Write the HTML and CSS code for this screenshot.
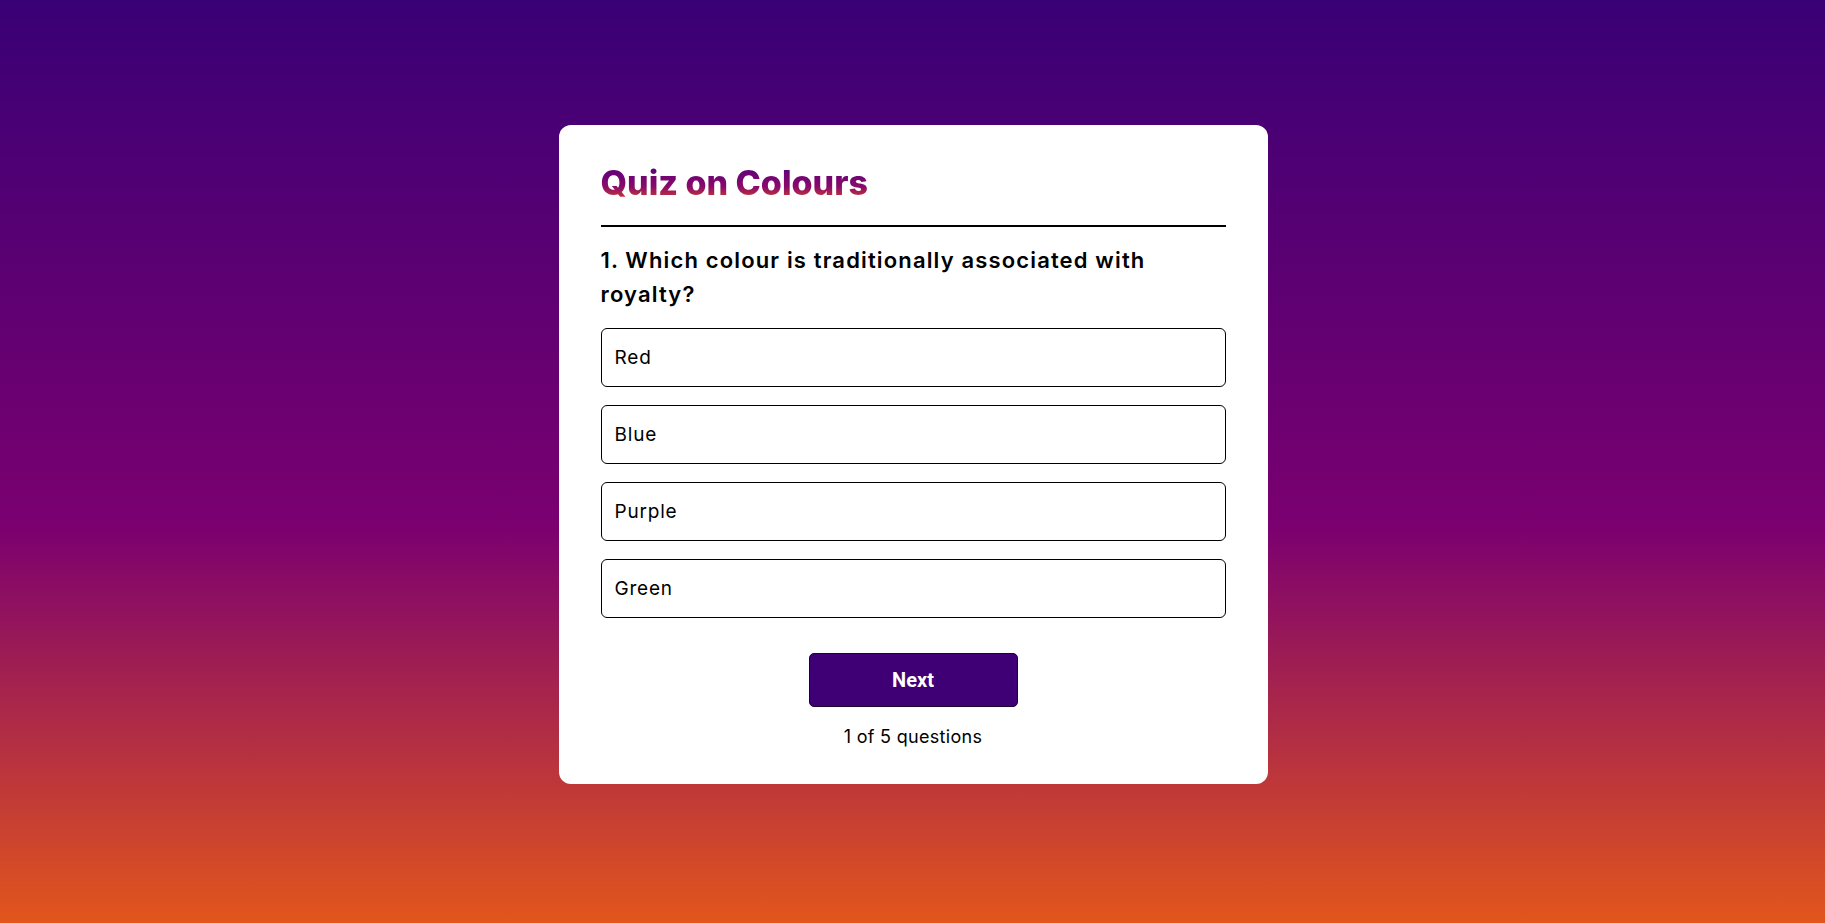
FILE: index.html
```html
<!DOCTYPE html>
<html lang="en">
<head>
<meta charset="utf-8">
<title>Quiz on Colours</title>
<link rel="stylesheet" href="styles.css">
</head>
<body>
<main class="page">
  <section class="card">
    <header class="card-header">
      <h1 class="title">Quiz on Colours</h1>
    </header>
    <h2 class="question">1. Which colour is traditionally associated with royalty?</h2>
    <ul class="options">
      <li class="option">Red</li>
      <li class="option">Blue</li>
      <li class="option">Purple</li>
      <li class="option">Green</li>
    </ul>
    <div class="actions">
      <button class="next-btn" type="button">Next</button>
      <p class="counter">1 of 5 questions</p>
    </div>
  </section>
</main>
</body>
</html>
```

FILE: styles.css
```css
* { box-sizing: border-box; }

html, body {
  margin: 0;
  padding: 0;
  height: 100%;
}

body {
  background: linear-gradient(to bottom, #3a0076 0%, #7b0070 57%, #e2561c 100%);
  font-family: "Inter", "Noto Sans", sans-serif;
  color: #000;
}

.page {
  min-height: 100%;
  display: flex;
  justify-content: center;
  align-items: flex-start;
  padding-top: 125px;
  padding-left: 1px;
}

.card {
  width: 709px;
  background: #fff;
  border-radius: 12px;
  padding: 37px 42px 36px;
}

.card-header {
  padding-bottom: 22px;
  border-bottom: 2px solid #000;
}

.title {
  margin: 0;
  font-size: 34px;
  font-weight: 800;
  line-height: 41px;
  letter-spacing: 0;
  display: inline-block;
  background: linear-gradient(to bottom, #5e007a 15%, #8a0a6a 60%, #c0343c 85%, #e0501f 100%);
  -webkit-background-clip: text;
  background-clip: text;
  color: transparent;
}

.question {
  margin: 16px 0 17px;
  font-size: 22px;
  font-weight: 600;
  line-height: 34px;
  letter-spacing: 1.15px;
}

.options {
  list-style: none;
  margin: 0;
  padding: 0;
  display: flex;
  flex-direction: column;
  gap: 18px;
}

.option {
  height: 59px;
  border: 1px solid #000;
  border-radius: 6px;
  padding: 0 13px;
  display: flex;
  align-items: center;
  font-size: 19px;
  font-weight: 400;
  letter-spacing: 0.8px;
}

.actions {
  display: flex;
  flex-direction: column;
  align-items: center;
  margin-top: 35px;
}

.next-btn {
  width: 209px;
  height: 54px;
  background: #3e0074;
  border: 1px solid #1c0030;
  border-radius: 5px;
  color: #fff;
  font-family: "Roboto", "Liberation Sans", sans-serif;
  font-weight: 700;
  font-size: 20px;
  padding: 0;
}

.counter {
  margin: 19px 0 0;
  font-size: 18px;
  line-height: 22px;
  letter-spacing: 0.3px;
}
```
